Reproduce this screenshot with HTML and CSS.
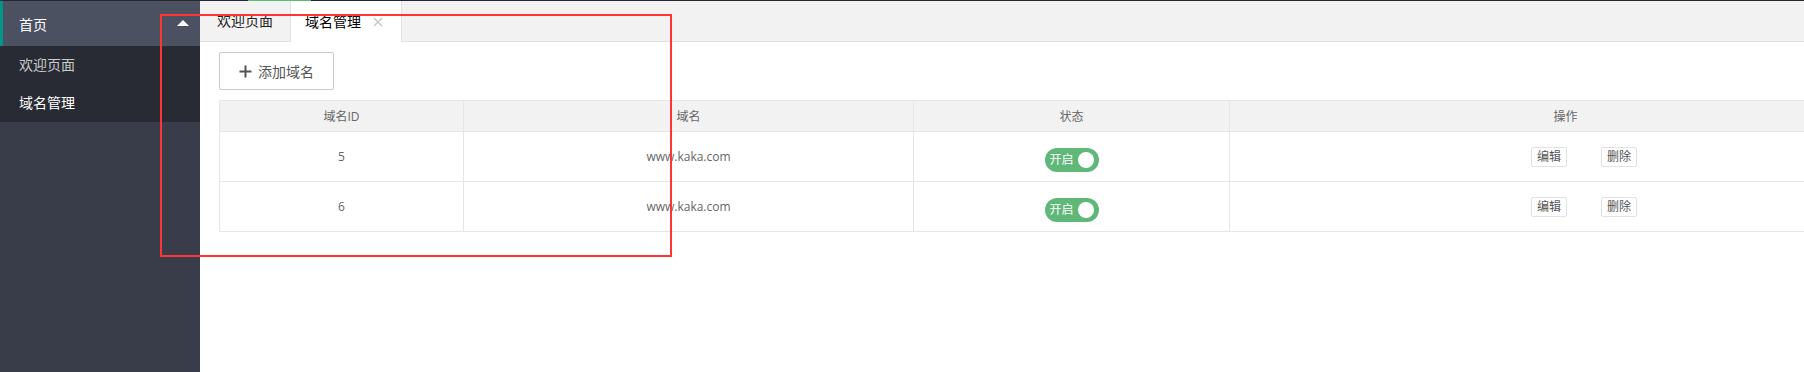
FILE: index.html
```html
<!DOCTYPE html>
<html lang="zh-CN">
<head>
    <meta charset="UTF-8">
    <meta name="viewport" content="width=device-width, initial-scale=1.0">
    <title>域名管理</title>
    <link rel="stylesheet" href="styles.css">
</head>
<body>
    <div class="topline"><i></i></div>
    <div class="layout">
        <aside class="side">
            <div class="nav-head">首页<span class="more"></span></div>
            <dl class="nav-child">
                <dd>欢迎页面</dd>
                <dd class="this">域名管理</dd>
            </dl>
        </aside>
        <main class="main">
            <ul class="tabs">
                <li>欢迎页面</li>
                <li class="active">域名管理
                    <svg class="close" width="10" height="10" viewBox="0 0 10 10"><path d="M1 1L9 9M9 1L1 9" stroke="#c2c2c2" stroke-width="1.2"/></svg>
                </li>
            </ul>
            <div class="content">
                <button class="btn">
                    <svg width="13" height="13" viewBox="0 0 13 13"><path d="M6.5 0.5V12.5M0.5 6.5H12.5" stroke="#555" stroke-width="2"/></svg>
                    添加域名
                </button>
                <table class="grid">
                    <colgroup>
                        <col style="width: 244px">
                        <col style="width: 450px">
                        <col style="width: 316px">
                        <col style="width: 709px">
                    </colgroup>
                    <thead>
                        <tr><th>域名ID</th><th>域名</th><th>状态</th><th class="ops-head">操作</th></tr>
                    </thead>
                    <tbody>
                        <tr>
                            <td>5</td>
                            <td>www.kaka.com</td>
                            <td><span class="switch"><em>开启</em><i></i></span></td>
                            <td><div class="ops"><span class="mini">编辑</span><span class="mini">删除</span></div></td>
                        </tr>
                        <tr>
                            <td>6</td>
                            <td>www.kaka.com</td>
                            <td><span class="switch"><em>开启</em><i></i></span></td>
                            <td><div class="ops"><span class="mini">编辑</span><span class="mini">删除</span></div></td>
                        </tr>
                    </tbody>
                </table>
            </div>
        </main>
    </div>
    <div class="mark"></div>
</body>
</html>
```

FILE: styles.css
```css
html, body { margin: 0; padding: 0; }
body { width: 1804px; height: 372px; overflow: hidden; background: #fff; font-family: "Open Sans", "Noto Sans CJK SC", sans-serif; font-size: 14px; color: #333; }

.topline { height: 1px; background: #23262e; }
.topline i { display: block; width: 63px; height: 1px; margin-left: 248px; background: #5fb878; }

.layout { display: flex; height: 371px; }

/* sidebar */
.side { width: 200px; flex: none; background: #393d49; }
.nav-head { display: flex; align-items: center; justify-content: space-between; height: 45px; padding: 0 11px 0 16px;
            border-left: 3px solid #009688; background: #4c5161; color: #fff; }
.more { width: 0; height: 0; border-left: 6px solid transparent; border-right: 6px solid transparent; border-bottom: 6px solid #fff; margin-top: -1px; }
.nav-child { margin: 0; background: #282b33; }
.nav-child dd { margin: 0; height: 38px; line-height: 38px; padding-left: 19px; color: rgba(255,255,255,.75); }
.nav-child dd.this { color: #fff; }

/* main */
.main { flex: 1; min-width: 0; overflow: hidden; }
.tabs { display: flex; height: 40px; margin: 0; padding: 0; list-style: none; background: #f2f2f2; border-bottom: 1px solid #e2e2e2; }
.tabs li { height: 40px; line-height: 40px; padding: 0 17px; border-right: 1px solid #e2e2e2; color: #222; white-space: nowrap; }
.tabs li.active { display: flex; align-items: center; height: 41px; padding: 0 18px 0 14px; background: #fff; color: #000; }
.tabs .close { margin-left: 12px; }

.content { padding: 10px 0 0 19px; }
.btn { display: flex; align-items: center; gap: 6px; height: 38px; padding: 0 19px; border: 1px solid #c9c9c9; border-radius: 2px;
       background: #fff; color: #555; font: inherit; font-size: 14px; cursor: pointer; }

.grid { margin-top: 10px; border-collapse: collapse; table-layout: fixed; width: 1719px; font-size: 12px; color: #666; }
.grid th, .grid td { border: 1px solid #e6e6e6; padding: 0; text-align: center; font-weight: normal; vertical-align: middle; }
.grid th { height: 30px; background: #f2f2f2; }
.grid td { height: 49px; }
.grid th.ops-head { padding-right: 37px; }

.switch { display: inline-flex; align-items: center; justify-content: space-between; box-sizing: border-box; width: 54px; height: 24px;
          margin-top: 7px; padding: 0 5px; border-radius: 12px; background: #5fb878; color: #fff; vertical-align: middle; }
.switch em { font-style: normal; font-size: 12px; line-height: 24px; }
.switch i { width: 16px; height: 16px; border-radius: 50%; background: #fff; }

.ops { display: flex; justify-content: center; gap: 34px; }
.mini { box-sizing: border-box; height: 20px; line-height: 18px; padding: 0 5px; border: 1px solid #e2e2e2; border-radius: 2px; background: #fff; color: #555; }

/* red annotation frame */
.mark { position: absolute; left: 160px; top: 14px; width: 512px; height: 243px; box-sizing: border-box; border: 2px solid #ff3535; }
```
